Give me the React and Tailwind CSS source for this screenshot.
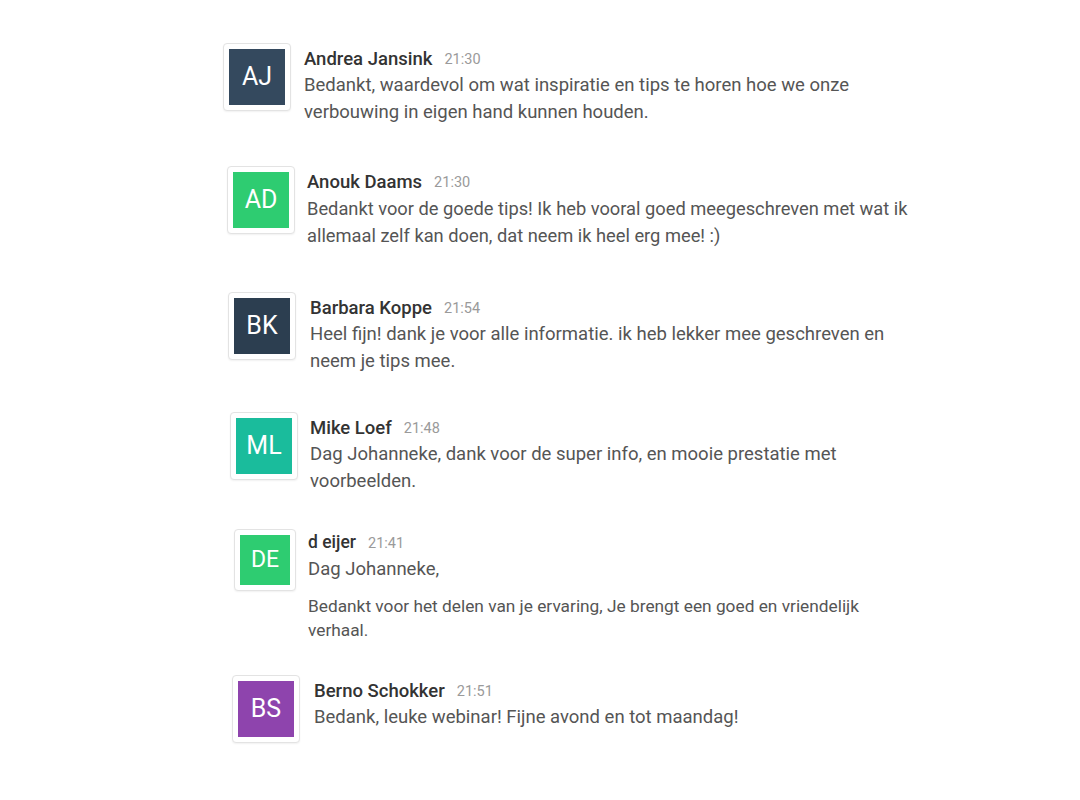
import React from "react";

function Avatar({ initials, color, small }) {
  return (
    <div className="shrink-0 rounded-[4px] border border-[#e3e3e3] bg-white p-[5px] shadow-[0_1px_2px_rgba(0,0,0,0.06)]">
      <div
        className={`flex items-center justify-center text-white ${small ? "h-[50px] w-[50px] text-[23px]" : "h-[56px] w-[56px] text-[25px]"} ${color}`}
      >
        {initials}
      </div>
    </div>
  );
}

function Message({ initials, color, name, time, className, gap, children, small }) {
  return (
    <div className={`flex items-start ${className}`}>
      <Avatar initials={initials} color={color} small={small} />
      <div className={gap}>
        <div className={`flex items-center gap-[12px] ${small ? "mt-[2px] h-[24px]" : "mt-[3px] h-[26px]"}`}>
          <span className={`font-medium leading-none text-[#333333] ${small ? "text-[17.5px]" : "text-[18.5px]"}`}>{name}</span>
          <span className="mt-[2px] text-[14.5px] leading-none text-[#9a9a9a]">{time}</span>
        </div>
        {children}
      </div>
    </div>
  );
}

export default function App() {
  return (
    <div
      className="min-h-[800px] w-[1080px] bg-white pt-[43px]"
      style={{ fontFamily: "Roboto, 'Noto Sans', sans-serif" }}
    >
      <Message
        initials="AJ"
        color="bg-[#34495e]"
        name="Andrea Jansink"
        time="21:30"
        className="ml-[223px]"
        gap="ml-[13px]"
      >
        <p className="w-[600px] text-[18.5px] leading-[27px] text-[#555555]">
          Bedankt, waardevol om wat inspiratie en tips te horen hoe we onze verbouwing in eigen hand kunnen houden.
        </p>
      </Message>

      <Message
        initials="AD"
        color="bg-[#2ecc71]"
        name="Anouk Daams"
        time="21:30"
        className="ml-[227px] mt-[40px]"
        gap="ml-[12px]"
      >
        <p className="w-[630px] text-[18.3px] leading-[27px] text-[#555555]">
          Bedankt voor de goede tips! Ik heb vooral goed meegeschreven met wat ik allemaal zelf kan doen, dat neem ik heel erg mee! :)
        </p>
      </Message>

      <Message
        initials="BK"
        color="bg-[#2c3e50]"
        name="Barbara Koppe"
        time="21:54"
        className="ml-[228px] mt-[43px]"
        gap="ml-[14px]"
      >
        <p className="w-[610px] text-[18.5px] leading-[27px] text-[#555555]">
          Heel fijn! dank je voor alle informatie. ik heb lekker mee geschreven en neem je tips mee.
        </p>
      </Message>

      <Message
        initials="ML"
        color="bg-[#1abc9c]"
        name="Mike Loef"
        time="21:48"
        className="ml-[230px] mt-[37px]"
        gap="ml-[12px]"
      >
        <p className="w-[570px] text-[18.5px] leading-[27px] text-[#555555]">
          Dag Johanneke, dank voor de super info, en mooie prestatie met voorbeelden.
        </p>
      </Message>

      <Message
        initials="DE"
        color="bg-[#2ecc71]"
        name="d eijer"
        time="21:41"
        className="ml-[234px] mt-[34px]"
        gap="ml-[12px]"
        small
      >
        <p className="text-[18.5px] leading-[28px] text-[#555555]">Dag Johanneke,</p>
        <p className="mt-[11px] w-[570px] text-[17.3px] leading-[24px] text-[#555555]">
          Bedankt voor het delen van je ervaring, Je brengt een goed en vriendelijk verhaal.
        </p>
      </Message>

      <Message
        initials="BS"
        color="bg-[#8e44ad]"
        name="Berno Schokker"
        time="21:51"
        className="ml-[232px] mt-[33px]"
        gap="ml-[14px]"
      >
        <p className="w-[600px] text-[18.5px] leading-[27px] text-[#555555]">
          Bedank, leuke webinar! Fijne avond en tot maandag!
        </p>
      </Message>
    </div>
  );
}
